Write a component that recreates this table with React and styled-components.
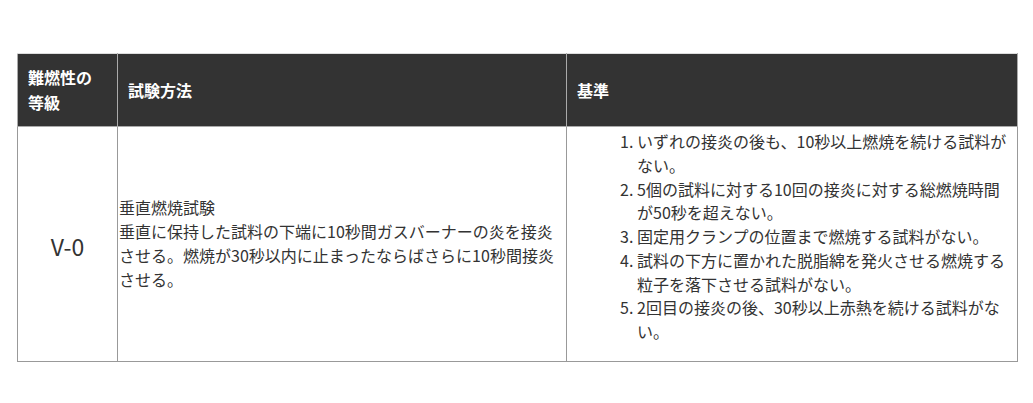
import React from 'react';
import styled, { createGlobalStyle } from 'styled-components';

const GlobalStyle = createGlobalStyle`
  html, body {
    margin: 0;
    padding: 0;
    background: #fff;
  }
  body {
    font-family: "Noto Sans CJK JP", "Noto Sans", sans-serif;
    color: #333;
  }
`

const Wrapper = styled.div`
  padding: 53px 16px 0 17px;
`

const Table = styled.table`
  width: 1000px;
  border-collapse: collapse;
  table-layout: fixed;
  font-size: 16px;
`

const Col = styled.col`
  width: ${p => p.$width}px;
`

const HeadCell = styled.th`
  box-sizing: border-box;
  background: #333;
  color: #fff;
  font-weight: bold;
  text-align: left;
  vertical-align: middle;
  line-height: 25px;
  height: 73px;
  padding: 11px 14px 11px 10px;
  border: 1px solid #aaa;
  border-top-color: #ddd;
  border-left-color: ${p => (p.$first ? '#aaa' : '#ccc')};
  border-bottom-color: #aaa;
`

const Cell = styled.td`
  box-sizing: border-box;
  border: 1px solid #999;
  vertical-align: middle;
  line-height: 23.75px;
  text-align: ${p => (p.$center ? 'center' : 'left')};
  font-size: ${p => (p.$large ? '23px' : '16px')};
  padding: ${p => p.$pad || '0 1px'};
  color: #333;
`

const List = styled.ol`
  margin: 0 0 17px;
  padding-left: 66px;
`

const Item = styled.li`
  line-height: 23.75px;
`

const criteria = [
  'いずれの接炎の後も、10秒以上燃焼を続ける試料がない。',
  '5個の試料に対する10回の接炎に対する総燃焼時間が50秒を超えない。',
  '固定用クランプの位置まで燃焼する試料がない。',
  '試料の下方に置かれた脱脂綿を発火させる燃焼する粒子を落下させる試料がない。',
  '2回目の接炎の後、30秒以上赤熱を続ける試料がない。',
]

export default function App() {
  return (
    <>
      <GlobalStyle />
      <Wrapper>
        <Table>
          <colgroup>
            <Col $width={100} />
            <Col $width={449} />
            <Col $width={451} />
          </colgroup>
          <thead>
            <tr>
              <HeadCell $first>難燃性の等級</HeadCell>
              <HeadCell>試験方法</HeadCell>
              <HeadCell>基準</HeadCell>
            </tr>
          </thead>
          <tbody>
            <tr>
              <Cell $center $large $pad="6px 1px 0">V-0</Cell>
              <Cell>
                垂直燃焼試験<br />
                垂直に保持した試料の下端に10秒間ガスバーナーの炎を接炎させる。燃焼が30秒以内に止まったならばさらに10秒間接炎させる。
              </Cell>
              <Cell $pad="3px 4px 0">
                <List>
                  {criteria.map(c => (
                    <Item key={c}>{c}</Item>
                  ))}
                </List>
              </Cell>
            </tr>
          </tbody>
        </Table>
      </Wrapper>
    </>
  )
}
